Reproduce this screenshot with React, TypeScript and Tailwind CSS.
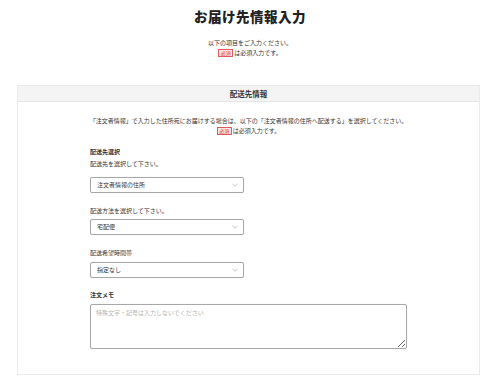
const Badge = () => (
  <span className="border border-[#e05a5a] bg-[#fde8e8] text-[#d33] text-[5px] leading-[6px] px-[1.5px] mr-[1px]">
    必須
  </span>
);

const RequiredNote = () => (
  <div className="h-[10px] flex items-center justify-center text-[6px] leading-[10px]">
    <Badge />
    <span>は必須入力です。</span>
  </div>
);

const Chevron = () => (
  <svg width="6" height="4" viewBox="0 0 6 4" className="shrink-0">
    <path d="M0.5 0.8 L3 3.2 L5.5 0.8" fill="none" stroke="#aaa" strokeWidth="0.7" />
  </svg>
);

interface SelectBoxProps {
  value: string;
}

const SelectBox: React.FC<SelectBoxProps> = ({ value }) => (
  <div className="w-[154px] h-[16px] border border-[#a8a8a8] rounded-[2px] shadow-[0_0_1px_rgba(0,0,0,0.15)] bg-white flex items-center justify-between pl-[6px] pr-[5px]">
    <span className="text-[6px] leading-[10px] text-[#333]">{value}</span>
    <Chevron />
  </div>
);

export default function App() {
  return (
    <div className="w-[500px] h-[387px] bg-white text-[#333] font-['Noto_Sans_CJK_JP',sans-serif] overflow-hidden">
      <div className="h-[32px] flex items-center justify-center">
        <h1 className="text-[13.5px] font-black tracking-[0.5px] text-[#222]">お届け先情報入力</h1>
      </div>

      <div className="mt-[6px] text-center text-[6px] leading-[10px]">
        <p>以下の項目をご入力ください。</p>
        <RequiredNote />
      </div>

      <div className="mt-[27px] ml-[17px] w-[463px] border border-[#ebebeb]">
        <div className="h-[16px] bg-[#f4f4f4] border-b border-[#e6e6e6] flex items-center justify-center">
          <h2 className="text-[7.5px] font-bold text-[#333]">配送先情報</h2>
        </div>

        <div className="pt-[14px] pb-[25px]">
          <div className="text-center text-[6px] leading-[10px]">
            <p>「注文者情報」で入力した住所宛にお届けする場合は、以下の「注文者情報の住所へ配送する」を選択してください。</p>
            <RequiredNote />
          </div>

          <div className="w-[317px] mx-auto">
            <p className="mt-[11px] h-[10px] text-[6px] leading-[10px] font-bold">配送先選択</p>
            <p className="mt-[2px] h-[10px] text-[6px] leading-[10px]">配送先を選択して下さい。</p>
            <div className="mt-[8px]">
              <SelectBox value="注文者情報の住所" />
            </div>

            <p className="mt-[13px] h-[10px] text-[6px] leading-[10px]">配送方法を選択して下さい。</p>
            <div className="mt-[3px]">
              <SelectBox value="宅配便" />
            </div>

            <p className="mt-[13px] h-[10px] text-[6px] leading-[10px]">配送希望時間帯</p>
            <div className="mt-[4px]">
              <SelectBox value="指定なし" />
            </div>

            <p className="mt-[12px] h-[10px] text-[6px] leading-[10px] font-bold">注文メモ</p>
            <textarea
              className="mt-[4px] block w-[317px] h-[45px] border border-[#a8a8a8] rounded-[2px] shadow-[0_0_1px_rgba(0,0,0,0.15)] px-[5px] py-[3px] text-[6px] leading-[10px] placeholder:text-[#b5b5b5] outline-none"
              placeholder="特殊文字・記号は入力しないでください"
            />
          </div>
        </div>
      </div>
    </div>
  );
}
